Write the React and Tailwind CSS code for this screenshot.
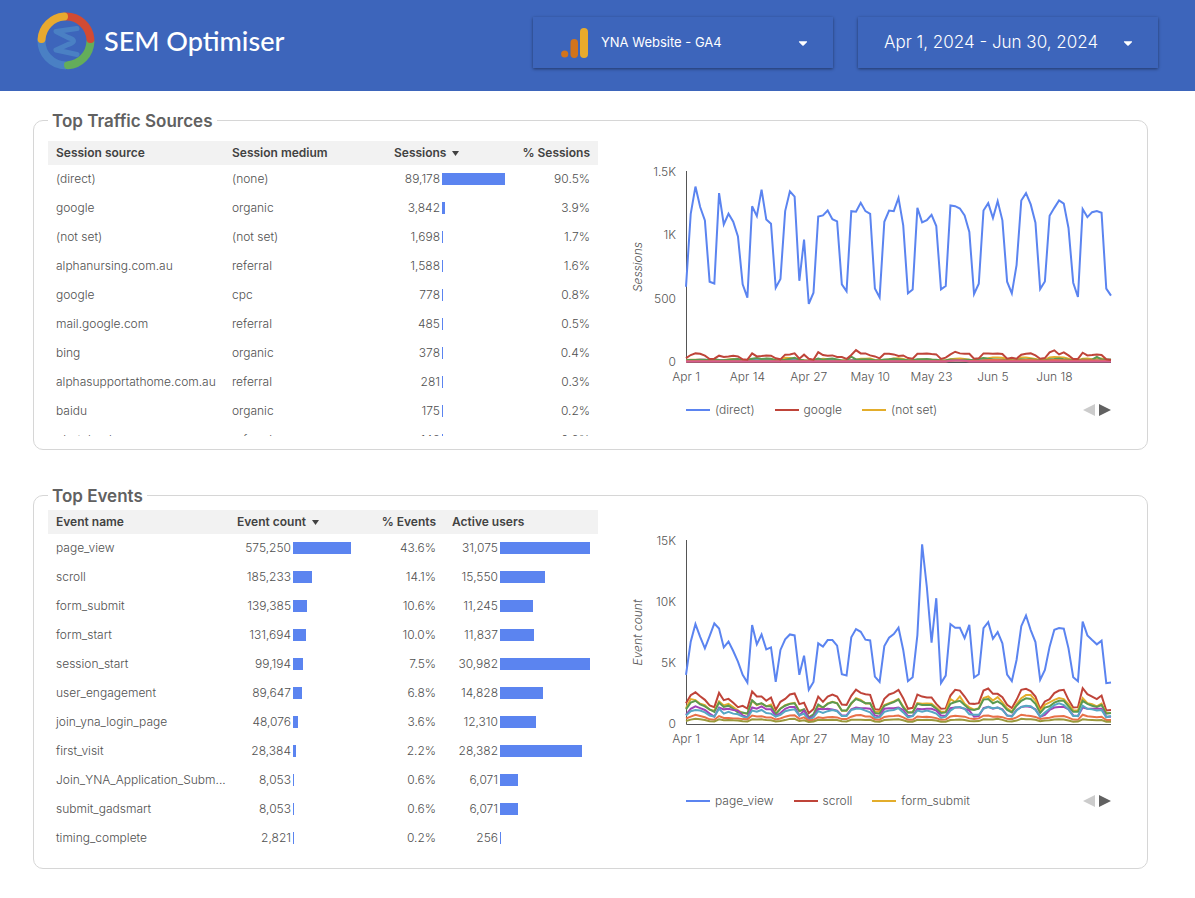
import { FaCaretDown } from 'react-icons/fa'

const sources = [
  { source: '(direct)', medium: '(none)', sessions: 89178, share: '90.5%' },
  { source: 'google', medium: 'organic', sessions: 3842, share: '3.9%' },
  { source: '(not set)', medium: '(not set)', sessions: 1698, share: '1.7%' },
  { source: 'alphanursing.com.au', medium: 'referral', sessions: 1588, share: '1.6%' },
  { source: 'google', medium: 'cpc', sessions: 778, share: '0.8%' },
  { source: 'mail.google.com', medium: 'referral', sessions: 485, share: '0.5%' },
  { source: 'bing', medium: 'organic', sessions: 378, share: '0.4%' },
  { source: 'alphasupportathome.com.au', medium: 'referral', sessions: 281, share: '0.3%' },
  { source: 'baidu', medium: 'organic', sessions: 175, share: '0.2%' },
  { source: 'photobank', medium: 'referral', sessions: 148, share: '0.2%' },
]

const events = [
  { name: 'page_view', count: 575250, share: '43.6%', users: 31075 },
  { name: 'scroll', count: 185233, share: '14.1%', users: 15550 },
  { name: 'form_submit', count: 139385, share: '10.6%', users: 11245 },
  { name: 'form_start', count: 131694, share: '10.0%', users: 11837 },
  { name: 'session_start', count: 99194, share: '7.5%', users: 30982 },
  { name: 'user_engagement', count: 89647, share: '6.8%', users: 14828 },
  { name: 'join_yna_login_page', count: 48076, share: '3.6%', users: 12310 },
  { name: 'first_visit', count: 28384, share: '2.2%', users: 28382 },
  { name: 'Join_YNA_Application_Subm...', count: 8053, share: '0.6%', users: 6071 },
  { name: 'submit_gadsmart', count: 8053, share: '0.6%', users: 6071 },
  { name: 'timing_complete', count: 2821, share: '0.2%', users: 256 },
]

// One value per day, Apr 1 - Jun 30
const sessionSeries = [
  {
    color: '#e3ad2b',
    values: [16, 17, 18, 17, 16, 15, 12, 13, 15, 20, 24, 20, 12, 12, 20, 15, 14, 26, 24, 12, 14, 33, 31, 24, 14, 12, 10, 12, 16, 25, 22, 15, 14, 12, 12, 15, 18, 26, 26, 28, 16, 12, 16, 22, 28, 30, 24, 14, 12, 18, 22, 20, 18, 14, 12, 14, 22, 25, 28, 24, 18, 14, 16, 28, 30, 36, 36, 34, 22, 16, 14, 36, 35, 30, 24, 16, 18, 36, 40, 38, 36, 26, 16, 14, 26, 28, 22, 26, 28, 16, 14],
  },
  {
    color: '#a142b8',
    values: [9, 12, 16, 18, 17, 12, 10, 16, 12, 14, 12, 12, 8, 8, 14, 16, 15, 14, 12, 8, 10, 14, 16, 14, 9, 8, 6, 8, 12, 10, 12, 14, 12, 8, 8, 12, 14, 12, 14, 12, 9, 8, 12, 14, 12, 13, 12, 8, 8, 12, 14, 15, 12, 12, 8, 8, 12, 14, 14, 12, 12, 8, 8, 14, 12, 12, 14, 12, 8, 8, 10, 12, 12, 14, 12, 8, 8, 12, 14, 12, 12, 12, 8, 8, 12, 12, 12, 10, 10, 8, 8],
  },
  {
    color: '#56a7c4',
    values: [8, 12, 12, 10, 10, 8, 8, 10, 10, 12, 12, 10, 8, 8, 12, 16, 14, 14, 12, 9, 8, 12, 14, 12, 8, 8, 8, 8, 10, 12, 12, 14, 12, 8, 8, 10, 12, 12, 13, 12, 9, 8, 12, 16, 14, 12, 10, 8, 8, 12, 12, 14, 14, 12, 8, 8, 12, 12, 14, 12, 12, 9, 18, 16, 22, 18, 14, 14, 10, 8, 9, 12, 14, 13, 12, 8, 8, 12, 14, 12, 12, 12, 8, 8, 12, 14, 12, 12, 10, 8, 8],
  },
  {
    color: '#5b9a50',
    values: [13, 15, 16, 18, 17, 16, 22, 16, 14, 18, 22, 24, 16, 18, 26, 31, 24, 28, 26, 14, 16, 18, 26, 34, 18, 14, 12, 16, 28, 18, 24, 28, 20, 12, 14, 42, 20, 20, 22, 20, 14, 14, 20, 22, 26, 22, 18, 14, 14, 22, 22, 24, 20, 18, 12, 12, 20, 18, 16, 18, 18, 12, 26, 32, 26, 20, 20, 18, 12, 12, 14, 22, 20, 22, 18, 12, 12, 22, 24, 28, 22, 18, 12, 12, 20, 18, 18, 40, 20, 20, 20],
  },
  {
    color: '#e87048',
    values: [5, 6, 6, 6, 6, 5, 5, 6, 6, 6, 6, 6, 5, 5, 6, 6, 6, 6, 6, 5, 5, 6, 6, 6, 5, 5, 5, 5, 6, 6, 6, 6, 6, 5, 5, 6, 6, 6, 6, 6, 5, 5, 6, 6, 6, 6, 6, 5, 5, 6, 6, 6, 6, 6, 5, 5, 10, 12, 12, 10, 8, 8, 8, 14, 16, 16, 16, 14, 10, 10, 12, 14, 16, 16, 14, 10, 10, 14, 16, 14, 14, 12, 10, 10, 14, 14, 14, 12, 12, 8, 8],
  },
  {
    color: '#d65b8e',
    values: [4, 4, 4, 4, 4, 4, 4, 4, 4, 4, 4, 4, 4, 4, 4, 4, 4, 4, 4, 4, 4, 4, 4, 4, 4, 4, 4, 4, 4, 4, 4, 4, 4, 4, 4, 4, 4, 4, 4, 4, 4, 4, 4, 4, 4, 4, 4, 4, 4, 4, 4, 4, 4, 4, 4, 4, 10, 12, 12, 10, 4, 4, 4, 4, 4, 4, 4, 4, 4, 4, 4, 4, 4, 4, 4, 4, 4, 4, 4, 4, 4, 4, 4, 4, 4, 4, 4, 4, 4, 4, 4],
  },
  {
    label: 'google',
    color: '#bf4439',
    values: [31, 55, 68, 65, 50, 24, 26, 50, 39, 44, 50, 44, 21, 18, 68, 44, 47, 52, 50, 29, 21, 58, 60, 68, 26, 58, 26, 18, 78, 55, 50, 52, 39, 39, 24, 55, 94, 68, 68, 52, 44, 29, 65, 65, 60, 47, 52, 31, 26, 65, 65, 68, 63, 60, 24, 34, 60, 81, 68, 65, 65, 26, 29, 68, 68, 66, 68, 63, 26, 34, 26, 58, 65, 68, 52, 26, 31, 76, 92, 60, 76, 52, 24, 24, 73, 52, 55, 60, 55, 21, 16],
  },
  {
    label: '(direct)',
    color: '#5b84f0',
    values: [594, 1170, 1385, 1223, 1118, 634, 620, 1333, 1086, 1170, 1107, 992, 613, 508, 1230, 1152, 1361, 1126, 1092, 586, 655, 1191, 1348, 1306, 641, 966, 458, 547, 1149, 1157, 1196, 1128, 1110, 613, 558, 1191, 1186, 1257, 1191, 1170, 581, 510, 1107, 1196, 1191, 1296, 1079, 542, 573, 1217, 1102, 1120, 1162, 1073, 573, 600, 1236, 1230, 1212, 1157, 1026, 537, 618, 1196, 1254, 1136, 1270, 1118, 634, 542, 764, 1275, 1333, 1244, 1100, 576, 636, 1155, 1217, 1275, 1251, 1058, 626, 513, 1207, 1144, 1183, 1191, 1178, 579, 524],
  },
]

const eventSeries = [
  {
    color: '#5b84f0',
    values: [4030, 6750, 8190, 7150, 6200, 7210, 8240, 7830, 6280, 6750, 5980, 5110, 4030, 3400, 8110, 6530, 7340, 6120, 6280, 3450, 6070, 6940, 7340, 7260, 4030, 5600, 2800, 3450, 6610, 6340, 6880, 6880, 6420, 4080, 3970, 7100, 7780, 7560, 6910, 6850, 3890, 3450, 6390, 7070, 7370, 7890, 6070, 3510, 3840, 7290, 14720, 11230, 6660, 10310, 3350, 3970, 8190, 7890, 7890, 7040, 8130, 3810, 4080, 7860, 8350, 6990, 7530, 6610, 4050, 3510, 5250, 8020, 8890, 7700, 6720, 3620, 4430, 6340, 7720, 7860, 7810, 6200, 3840, 3510, 8400, 7260, 6880, 6530, 6830, 3350, 3400],
  },
  {
    color: '#bf4439',
    values: [1700, 2360, 2600, 2280, 1980, 1520, 1380, 2550, 1950, 2060, 1740, 1380, 1490, 1270, 2660, 2250, 2250, 1900, 2170, 1160, 1820, 2060, 2420, 2500, 1630, 1740, 890, 1220, 2250, 1820, 2250, 2420, 2250, 1600, 1570, 2310, 2820, 2550, 2440, 2390, 1220, 1160, 2060, 2420, 2550, 2800, 2120, 1250, 1330, 2420, 2250, 2170, 2170, 1650, 1250, 1280, 2330, 2800, 2740, 2250, 1680, 1650, 1710, 2740, 2910, 2470, 2470, 2200, 1570, 1300, 1980, 2800, 2880, 2690, 2250, 1220, 1850, 2040, 2530, 2740, 2800, 1980, 1360, 1380, 2930, 2440, 2250, 2040, 2330, 1110, 1140],
  },
  {
    color: '#e3ad2b',
    values: [1300, 2040, 1960, 1660, 1550, 1170, 1090, 1850, 1520, 1660, 1390, 1110, 900, 840, 1900, 1550, 1690, 1440, 1600, 840, 1280, 1550, 1660, 1740, 1090, 1170, 490, 710, 1500, 1330, 1690, 1820, 1710, 1090, 1090, 1660, 2120, 1980, 1690, 1690, 1030, 1000, 1550, 1710, 1850, 2040, 1440, 950, 980, 1710, 1660, 1690, 1660, 1360, 1000, 1030, 2040, 1800, 2260, 1660, 1360, 1170, 1300, 2120, 2260, 1930, 2200, 1770, 1280, 1030, 1630, 2120, 2370, 2370, 1930, 1030, 1580, 1770, 1980, 2120, 2040, 1630, 1110, 1110, 2120, 1710, 1630, 1440, 1660, 900, 900],
  },
  {
    color: '#5b9a50',
    values: [1200, 1750, 1900, 1600, 1450, 1200, 1000, 1750, 1400, 1500, 1250, 950, 950, 850, 1950, 1600, 1700, 1450, 1450, 800, 1250, 1500, 1650, 1700, 1050, 1200, 550, 800, 1600, 1350, 1650, 1800, 1700, 1100, 1100, 1700, 2050, 1900, 1700, 1700, 900, 850, 1500, 1650, 1800, 2000, 1350, 950, 950, 1650, 1550, 1550, 1550, 1250, 900, 950, 1650, 1800, 1900, 1550, 1200, 1150, 1250, 2000, 2050, 1700, 1850, 1600, 1150, 950, 1500, 1900, 2100, 2050, 1650, 900, 1350, 1450, 1750, 1900, 1900, 1450, 1000, 1000, 1900, 1650, 1500, 1400, 1550, 850, 900],
  },
  {
    color: '#a142b8',
    values: [750, 1250, 1450, 1300, 1150, 850, 600, 1350, 1200, 1250, 1150, 1100, 700, 550, 1350, 1250, 1450, 1200, 1200, 650, 900, 1250, 1400, 1400, 700, 1100, 450, 600, 1250, 1200, 1250, 1200, 1100, 700, 700, 1200, 1350, 1300, 1300, 1250, 700, 600, 1250, 1300, 1300, 1350, 1150, 650, 650, 1250, 1200, 1250, 1250, 1100, 700, 650, 1300, 1350, 1350, 1250, 1100, 600, 650, 1300, 1400, 1250, 1350, 1200, 700, 650, 1150, 1400, 1450, 1400, 1200, 600, 750, 1150, 1350, 1400, 1400, 1200, 700, 650, 1350, 1250, 1250, 1250, 1250, 600, 600],
  },
  {
    color: '#56a7c4',
    values: [700, 1050, 1150, 1100, 950, 700, 600, 1250, 850, 1000, 850, 800, 600, 500, 1100, 1000, 1150, 900, 850, 600, 750, 1050, 1150, 1200, 700, 850, 300, 550, 1050, 900, 1050, 1150, 1050, 650, 650, 1150, 1250, 1250, 1100, 950, 500, 550, 1000, 1100, 1150, 1300, 950, 550, 650, 1100, 1000, 1100, 1000, 850, 500, 600, 1100, 1350, 1400, 1250, 800, 750, 750, 1250, 1400, 1300, 1350, 1150, 700, 600, 1100, 1400, 1500, 1450, 1150, 600, 950, 1250, 1550, 1700, 1550, 1200, 650, 650, 1500, 1250, 1200, 1100, 1150, 550, 650],
  },
  {
    color: '#e87048',
    values: [450, 600, 750, 650, 550, 380, 350, 650, 500, 500, 450, 450, 400, 380, 700, 620, 640, 540, 540, 380, 450, 600, 700, 720, 420, 540, 280, 340, 560, 500, 560, 580, 540, 400, 400, 600, 720, 740, 620, 620, 360, 350, 580, 640, 660, 700, 540, 340, 350, 620, 580, 600, 560, 480, 340, 360, 620, 680, 640, 600, 460, 420, 460, 680, 700, 600, 620, 560, 420, 400, 540, 760, 700, 660, 580, 420, 480, 520, 620, 640, 660, 520, 360, 340, 760, 640, 600, 560, 600, 320, 320],
  },
  {
    color: '#9b993c',
    values: [250, 360, 430, 380, 320, 220, 210, 380, 300, 320, 300, 290, 220, 200, 380, 360, 380, 320, 300, 200, 240, 320, 420, 430, 240, 300, 160, 200, 340, 320, 330, 340, 320, 220, 210, 340, 340, 340, 330, 340, 210, 190, 320, 340, 360, 380, 300, 190, 190, 340, 330, 340, 320, 280, 190, 190, 330, 340, 360, 320, 240, 220, 240, 380, 360, 360, 420, 340, 220, 200, 280, 430, 380, 380, 340, 220, 280, 300, 360, 380, 360, 280, 190, 200, 380, 340, 330, 300, 320, 190, 190],
  },
]

const dateTicks = [
  { day: 0, label: 'Apr 1' },
  { day: 13, label: 'Apr 14' },
  { day: 26, label: 'Apr 27' },
  { day: 39, label: 'May 10' },
  { day: 52, label: 'May 23' },
  { day: 65, label: 'Jun 5' },
  { day: 78, label: 'Jun 18' },
]

const Logo = () => (
  <div className="flex items-center gap-[9px]">
    <svg width="58" height="58" viewBox="0 0 58 58" fill="none" aria-hidden="true">
      <g strokeWidth="8">
        <path d="M4.6 27A24.4 24.4 0 0 0 29 53.4" stroke="#4a80c4" />
        <path d="M31 53.300A24.4 24.4 0 0 0 53.4 30" stroke="#64ad5a" strokeLinecap="round" />
        <path d="M29 4.6A24.4 24.4 0 0 1 53.4 27" stroke="#d24b33" strokeLinecap="round" />
        <path d="M4.6 27A24.4 24.4 0 0 1 27 4.6" stroke="#e8a92f" strokeLinecap="round" />
      </g>
      <path
        d="M40 16.5L19 19.5L31 25.500Q42 29 31 32.500L19 38L40 42.500"
        stroke="#4a80c4"
        strokeWidth="5"
        strokeLinecap="round"
        strokeLinejoin="round"
      />
    </svg>
    <span className="font-['Lato',sans-serif] text-[27px] leading-8 font-medium text-white">
      SEM Optimiser
    </span>
  </div>
)

const AnalyticsIcon = () => (
  <svg width="28" height="30" viewBox="0 0 28 30" aria-hidden="true">
    <circle cx="3.700" cy="26" r="3.600" fill="#d2741c" />
    <rect x="9.500" y="11" width="7.500" height="19" rx="3.700" fill="#d2741c" />
    <rect x="19" y="0" width="8" height="30" rx="4" fill="#e8ab2c" />
  </svg>
)

const ValueBar = ({ value, max, numberClass }) => (
  <div className="flex items-center gap-[2px]">
    <span className={`${numberClass} shrink-0 text-right`}>{value.toLocaleString('en-US')}</span>
    <div className="flex-1">
      <div className="h-3 min-w-px bg-[#5b84f0]" style={{ width: `${(value / max) * 100}%` }}></div>
    </div>
  </div>
)

const SortableHeader = ({ children }) => (
  <button className="flex items-center gap-[6px] font-semibold">
    {children}
    <svg width="7" height="5" viewBox="0 0 7 5" fill="currentColor" aria-hidden="true">
      <path d="M0 0H7L3.500 5Z" />
    </svg>
  </button>
)

const Card = ({ title, className, children }) => (
  <section className={`relative rounded-[10px] border border-[#d6d6d6] pr-9 pl-[14px] ${className}`}>
    <h2 className="absolute top-0 left-[14px] -translate-y-1/2 bg-white px-1 text-[17px] leading-6 font-semibold text-[#616161]">
      {title}
    </h2>
    <div className="flex items-start">{children}</div>
  </section>
)

const LineChart = ({ title, series, max, ticks, plotHeight }) => {
  const left = 64
  const right = 489
  const top = 11
  const bottom = top + plotHeight
  const x = (day) => left + (day * (right - left)) / 90
  const y = (value) => bottom - (value / max) * plotHeight

  return (
    <svg
      viewBox={`0 0 489 ${bottom + 26}`}
      className="block w-full overflow-visible fill-[#555555] text-xs font-light"
      role="img"
      aria-label={`${title} by day`}
    >
      {ticks.map((tick) => (
        <text key={tick.label} x="54" y={y(tick.value) + 4} textAnchor="end">
          {tick.label}
        </text>
      ))}
      <text
        transform={`translate(20 ${(top + bottom) / 2}) rotate(-90)`}
        textAnchor="middle"
        className="italic"
      >
        {title}
      </text>
      {dateTicks.map((tick) => (
        <text key={tick.label} x={x(tick.day)} y={bottom + 19} textAnchor="middle">
          {tick.label}
        </text>
      ))}
      <path d={`M${left + 0.5} ${top - 1}V${bottom + 0.5}H${right}`} fill="none" stroke="#555555" />
      {series.map((line) => (
        <polyline
          key={line.color}
          points={line.values.map((value, day) => `${x(day)},${y(value)}`).join(' ')}
          fill="none"
          stroke={line.color}
          strokeWidth="2"
        />
      ))}
    </svg>
  )
}

const Legend = ({ items, className }) => (
  <div className={`flex h-5 items-center justify-between pl-16 font-light text-[#555555] ${className}`}>
    <ul className="flex gap-5">
      {items.map((item) => (
        <li key={item.label} className="flex items-center gap-[5px]">
          <span className={`h-[2px] w-6 ${item.colorClass}`}></span>
          {item.label}
        </li>
      ))}
    </ul>
    <div className="flex gap-1">
      <button aria-label="Previous series" disabled>
        <svg width="12" height="12" viewBox="0 0 12 12" fill="#cccccc">
          <path d="M12 0V12L0 6Z" />
        </svg>
      </button>
      <button aria-label="Next series">
        <svg width="12" height="12" viewBox="0 0 12 12" fill="#616161">
          <path d="M0 0V12L12 6Z" />
        </svg>
      </button>
    </div>
  </div>
)

const SourcesTable = () => (
  <div className="h-[295px] w-[550px] shrink-0 overflow-hidden">
    <table className="w-full table-fixed">
      <thead className="bg-[#f2f2f2] text-[#424242]">
        <tr className="h-6 text-left">
          <th className="w-[176px] px-2 font-semibold">Session source</th>
          <th className="w-[162px] px-2 font-semibold">Session medium</th>
          <th className="w-[127px] px-2">
            <SortableHeader>Sessions</SortableHeader>
          </th>
          <th className="px-2 text-right font-semibold">% Sessions</th>
        </tr>
      </thead>
      <tbody className="font-light text-[#505050]">
        {sources.map((row) => (
          <tr key={row.source + row.medium} className="h-[29px]">
            <td className="px-2 pb-[2px] whitespace-nowrap">{row.source}</td>
            <td className="px-2 pb-[2px]">{row.medium}</td>
            <td className="px-2 pb-[2px]">
              <ValueBar value={row.sessions} max={89178} numberClass="w-[46px]" />
            </td>
            <td className="px-2 pb-[2px] text-right">{row.share}</td>
          </tr>
        ))}
      </tbody>
    </table>
  </div>
)

const EventsTable = () => (
  <div className="w-[550px] shrink-0">
    <table className="w-full table-fixed">
      <thead className="bg-[#f2f2f2] text-[#424242]">
        <tr className="h-6 text-left">
          <th className="w-[181px] px-2 font-semibold">Event name</th>
          <th className="w-[130px] px-2">
            <SortableHeader>Event count</SortableHeader>
          </th>
          <th className="w-[85px] px-2 text-right font-semibold">% Events</th>
          <th className="px-2 font-semibold">Active users</th>
        </tr>
      </thead>
      <tbody className="font-light text-[#505050]">
        {events.map((row) => (
          <tr key={row.name} className="h-[29px]">
            <td className="px-2 pb-[2px] whitespace-nowrap">{row.name}</td>
            <td className="px-2 pb-[2px]">
              <ValueBar value={row.count} max={575250} numberClass="w-[54px]" />
            </td>
            <td className="px-2 pb-[2px] text-right">{row.share}</td>
            <td className="px-2 pb-[2px]">
              <ValueBar value={row.users} max={31075} numberClass="w-[46px]" />
            </td>
          </tr>
        ))}
      </tbody>
    </table>
  </div>
)

export default function App() {
  return (
    <div className="min-h-screen bg-white font-['Inter',sans-serif] text-xs text-[#616161]">
      <header className="flex h-[91px] items-start justify-between bg-[#3d65bb] pr-[37px] pl-[37px] text-white">
        <div className="pt-3">
          <Logo />
        </div>
        <div className="flex gap-[25px] pt-[17px]">
          <button className="flex h-[51px] w-[300px] items-center pr-[25px] pl-7 text-[13px] shadow-[0_1px_3px_rgba(0,0,0,0.45)]">
            <AnalyticsIcon />
            <span className="pl-3">YNA Website - GA4</span>
            <FaCaretDown className="ml-auto h-[14px] w-[10px]" />
          </button>
          <button className="flex h-[51px] w-[300px] items-center justify-between pr-[25px] pl-[26px] text-[17px] font-light shadow-[0_1px_3px_rgba(0,0,0,0.45)]">
            Apr 1, 2024 - Jun 30, 2024
            <FaCaretDown className="h-[14px] w-[10px]" />
          </button>
        </div>
      </header>

      <main className="flex flex-col gap-[45px] pt-[29px] pr-[47px] pb-7 pl-[33px]">
        <Card title="Top Traffic Sources" className="pt-5 pb-[13px]">
          <SourcesTable />
          <div className="ml-6 flex-1 pt-5">
            <LineChart
              title="Sessions"
              series={sessionSeries}
              max={1500}
              plotHeight={190}
              ticks={[
                { value: 1500, label: '1.5K' },
                { value: 1000, label: '1K' },
                { value: 500, label: '500' },
                { value: 0, label: '0' },
              ]}
            />
            <Legend
              className="mt-3"
              items={[
                { label: '(direct)', colorClass: 'bg-[#5b84f0]' },
                { label: 'google', colorClass: 'bg-[#bf4439]' },
                { label: '(not set)', colorClass: 'bg-[#e3ad2b]' },
              ]}
            />
          </div>
        </Card>

        <Card title="Top Events" className="pt-[14px] pb-[15px]">
          <EventsTable />
          <div className="ml-6 flex-1 pt-5">
            <LineChart
              title="Event count"
              series={eventSeries}
              max={15000}
              plotHeight={183}
              ticks={[
                { value: 15000, label: '15K' },
                { value: 10000, label: '10K' },
                { value: 5000, label: '5K' },
                { value: 0, label: '0' },
              ]}
            />
            <Legend
              className="mt-[41px]"
              items={[
                { label: 'page_view', colorClass: 'bg-[#5b84f0]' },
                { label: 'scroll', colorClass: 'bg-[#bf4439]' },
                { label: 'form_submit', colorClass: 'bg-[#e3ad2b]' },
              ]}
            />
          </div>
        </Card>
      </main>
    </div>
  )
}
